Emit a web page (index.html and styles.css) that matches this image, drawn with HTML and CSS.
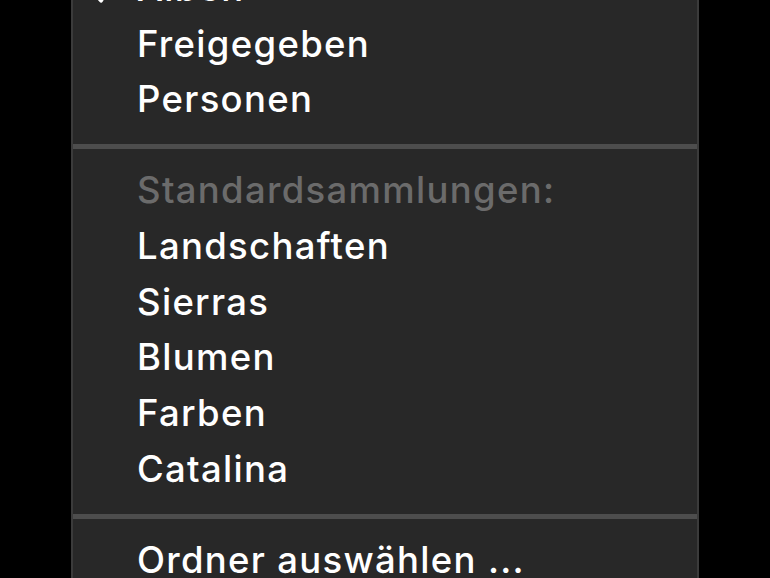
FILE: index.html
```html
<!DOCTYPE html>
<html lang="de">
<head>
    <meta charset="UTF-8">
    <meta name="viewport" content="width=device-width, initial-scale=1.0">
    <title>Menü</title>
    <link rel="stylesheet" href="styles.css">
</head>
<body>
    <div class="menu">
        <div class="item">
            <span class="mark">
                <svg class="check" width="24" height="24" viewBox="0 0 24 24"><path d="M2 13 L8 20 L19 3" fill="none" stroke="#fff" stroke-width="3.4" stroke-linecap="round" stroke-linejoin="round"/></svg>
            </span>
            <span>Alben</span>
        </div>
        <div class="item"><span class="mark"></span><span>Freigegeben</span></div>
        <div class="item"><span class="mark"></span><span>Personen</span></div>

        <div class="separator"></div>

        <div class="item header"><span class="mark"></span><span>Standardsammlungen:</span></div>
        <div class="item"><span class="mark"></span><span>Landschaften</span></div>
        <div class="item"><span class="mark"></span><span>Sierras</span></div>
        <div class="item"><span class="mark"></span><span>Blumen</span></div>
        <div class="item"><span class="mark"></span><span>Farben</span></div>
        <div class="item"><span class="mark"></span><span>Catalina</span></div>

        <div class="separator"></div>

        <div class="item"><span class="mark"></span><span>Ordner auswählen ...</span></div>
    </div>
</body>
</html>
```

FILE: styles.css
```css
body {
    margin: 0;
    background-color: #000000;
    font-family: Inter, "Noto Sans", sans-serif;
    overflow: hidden;
}
.menu {
    margin: -40px 0 0 71px;
    width: 624px;
    background: #282828;
    border-left: 2px solid #3b3b3b;
    border-right: 2px solid #3b3b3b;
    padding-bottom: 40px;
}
.item {
    display: flex;
    align-items: center;
    height: 55.75px;
    padding-left: 20px;
    color: #ffffff;
    font-size: 36.5px;
    font-weight: 500;
    letter-spacing: 1.3px;
    white-space: nowrap;
}
.mark {
    width: 44px;
    flex-shrink: 0;
    display: flex;
    align-items: center;
}
.check {
    margin-top: 10px;
}
.header {
    color: #6b6b6b;
}
.separator {
    height: 5px;
    background: #4d4d4d;
    margin: 17px 0 13px;
}
```
